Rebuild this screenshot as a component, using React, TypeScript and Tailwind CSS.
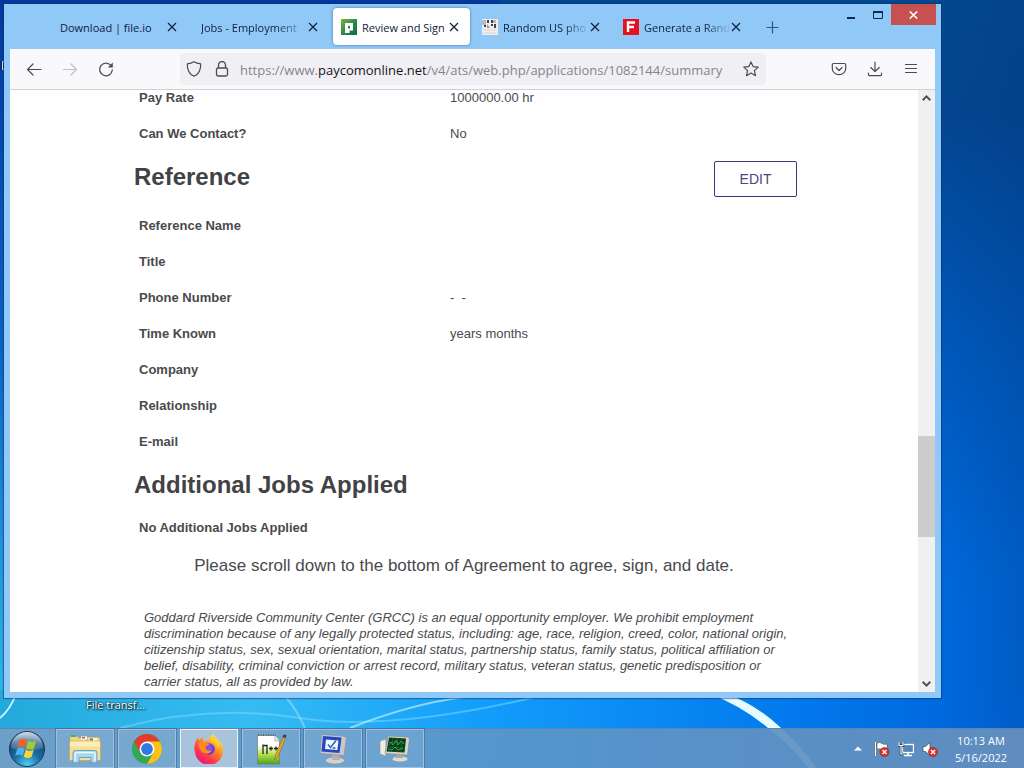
import type { ReactNode } from "react";

const ui = "font-['Open_Sans','Noto_Sans',sans-serif]";

function Cross() {
  return (
    <svg width="10" height="10" viewBox="0 0 10 10" fill="none" stroke="currentColor" strokeWidth="1.2" aria-hidden="true">
      <path d="M1 1l8 8M9 1L1 9" />
    </svg>
  );
}

function PaycomIcon() {
  return (
    <svg width="16" height="16" viewBox="0 0 16 16" className="shrink-0" aria-hidden="true">
      <defs>
        <linearGradient id="pay" x1="0" y1="0" x2="1" y2="1">
          <stop offset="0" stopColor="#7cb342" />
          <stop offset="0.5" stopColor="#2e8b4a" />
          <stop offset="1" stopColor="#0b6b47" />
        </linearGradient>
      </defs>
      <rect width="16" height="16" fill="url(#pay)" />
      <path d="M4 4h8v7.500H8.500V14H4z" fill="#fff" />
      <path d="M7 7h2v2.500H7z" fill="#1f7f49" />
    </svg>
  );
}

function PhoneIcon() {
  return (
    <svg width="16" height="16" viewBox="0 0 16 16" className="shrink-0" aria-hidden="true">
      <rect width="16" height="16" fill="#f0eff0" />
      <path d="M0 1h4v5H0zM11 1h3v3h-3z" fill="#b7babb" />
      <path d="M5 1h2v3H5zM9 5h2v2H9zM2 6h2v2H2z" fill="#33445c" />
      <path d="M9 1h2v3H9zM12 5h2v4h-2z" fill="#48413d" />
      <path d="M5 5l3 4H5z" fill="#bd8d83" />
      <path d="M1 11h14M1 14h14" stroke="#d4d4d8" />
    </svg>
  );
}

function FIcon() {
  return (
    <svg width="16" height="16" viewBox="0 0 16 16" className="shrink-0" aria-hidden="true">
      <rect width="16" height="16" fill="#e8101c" />
      <path d="M5 13V3.500h7M5 8h6" fill="none" stroke="#fff" strokeWidth="2.400" />
    </svg>
  );
}

const tabs: { title: string; icon?: ReactNode; active?: boolean; fade?: boolean }[] = [
  { title: "Download | file.io" },
  { title: "Jobs - Employment", fade: true },
  { title: "Review and Sign", icon: <PaycomIcon />, active: true },
  { title: "Random US pho", icon: <PhoneIcon />, fade: true },
  { title: "Generate a Rand", icon: <FIcon />, fade: true },
];

function TabBar() {
  return (
    <div className="flex h-[45px] items-start pl-[47px]">
      <div role="tablist" className="flex min-w-0 gap-1 pt-1">
        {tabs.map((t) => (
          <div
            key={t.title}
            className={
              "flex h-[37px] w-[137px] min-w-0 items-center gap-[5px] rounded pr-[11px] " +
              (t.icon ? "pl-2 " : "pl-[9px] ") +
              (t.active ? "bg-white shadow-[0_0_3px_rgba(20,60,110,0.6)]" : "")
            }
          >
            {t.icon}
            <button
              type="button"
              role="tab"
              aria-selected={!!t.active}
              className={
                "-mr-[5px] min-w-0 flex-1 pt-0.5 text-left text-[11px] leading-4 whitespace-nowrap text-[#10203c] " +
                (t.fade ? "mask-r-from-70% mask-r-to-100%" : "")
              }
            >
              {t.title}
            </button>
            <button type="button" aria-label={"Close " + t.title} className="shrink-0 text-[#10203c]">
              <Cross />
            </button>
          </div>
        ))}
      </div>
      <button type="button" aria-label="New tab" className="mt-[17px] ml-[14px] text-[#31537c]">
        <svg width="13" height="13" viewBox="0 0 13 13" stroke="currentColor" strokeWidth="1.2" aria-hidden="true">
          <path d="M6.500 0.500v12M0.500 6.500h12" />
        </svg>
      </button>
      <div className="ml-auto flex items-start text-[#0c2a50]">
        <button type="button" aria-label="Minimize" className="flex h-[21px] w-[27px] items-center justify-center">
          <svg width="10" height="10" viewBox="0 0 10 10" aria-hidden="true">
            <path d="M1 7h8v2H1z" fill="currentColor" />
          </svg>
        </button>
        <button type="button" aria-label="Maximize" className="flex h-[21px] w-[27px] items-center justify-center">
          <svg width="10" height="8" viewBox="0 0 10 8" fill="none" aria-hidden="true">
            <path d="M0.500 1h9v6.500h-9z" stroke="currentColor" />
            <path d="M0 0h10v2H0z" fill="currentColor" />
          </svg>
        </button>
        <button type="button" aria-label="Close" className="mr-[5px] flex h-[21px] w-[45px] items-center justify-center bg-[#c75050] text-white">
          <svg width="9" height="8" viewBox="0 0 9 8" fill="none" stroke="currentColor" strokeWidth="1.600" aria-hidden="true">
            <path d="M0.800 0.500l7.400 7M8.200 0.500l-7.400 7" />
          </svg>
        </button>
      </div>
    </div>
  );
}

function Toolbar() {
  return (
    <div className="flex h-[41px] shrink-0 items-center border-b border-[#cfcfd4] bg-[#f9f9fb] text-[#4b4b53]">
      <div className="flex items-center gap-5 pl-4">
        <button type="button" aria-label="Back">
          <svg width="16" height="16" viewBox="0 0 16 16" fill="none" stroke="currentColor" strokeWidth="1.200" strokeLinecap="round" strokeLinejoin="round" aria-hidden="true">
            <path d="M15 8.500H1.500M7 3L1.500 8.500 7 14" />
          </svg>
        </button>
        <button type="button" aria-label="Forward" className="text-[#c0c0c5]">
          <svg width="16" height="16" viewBox="0 0 16 16" fill="none" stroke="currentColor" strokeWidth="1.200" strokeLinecap="round" strokeLinejoin="round" aria-hidden="true">
            <path d="M1.500 8.500H14.500M9 3L14.500 8.500 9 14" />
          </svg>
        </button>
        <button type="button" aria-label="Reload">
          <svg width="16" height="16" viewBox="0 0 16 16" fill="none" stroke="currentColor" strokeWidth="1.300" strokeLinecap="round" aria-hidden="true">
            <path d="M13.300 5A6.300 6.300 0 1 0 14.300 9" />
            <path d="M14.800 1.500v5H9.800z" fill="currentColor" stroke="none" />
          </svg>
        </button>
      </div>
      <div className="ml-[66px] flex h-8 min-w-0 flex-1 items-center rounded bg-[#f0f0f4] pl-[6px]">
        <svg width="16" height="16" viewBox="0 0 16 16" fill="none" stroke="currentColor" strokeWidth="1.200" strokeLinejoin="round" className="shrink-0" aria-hidden="true">
          <path d="M8 0.800C6 2 4 2.600 1.300 2.900C1.100 9 3 13 8 15.300C13 13 14.900 9 14.700 2.900C12 2.600 10 2 8 0.800Z" />
        </svg>
        <svg width="14" height="16" viewBox="0 0 14 16" fill="none" stroke="currentColor" strokeWidth="1.300" className="ml-[13px] shrink-0" aria-hidden="true">
          <rect x="1.500" y="7" width="11" height="8" rx="1.500" />
          <path d="M3.500 7V4a3.500 3.500 0 0 1 7 0v3" />
        </svg>
        <div className="ml-[11px] min-w-0 flex-1 overflow-hidden pt-0.5 text-[13px] leading-5 whitespace-nowrap text-[#85858c]">
          https://www.<span className="text-[#15141a]">paycomonline.net</span>/v4/ats/web.php/applications/1082144/summary
        </div>
        <button type="button" aria-label="Bookmark this page" className="mr-[7px] shrink-0">
          <svg width="16" height="16" viewBox="0 0 16 16" fill="none" stroke="currentColor" strokeWidth="1.200" strokeLinejoin="round" aria-hidden="true">
            <path d="M8 0.900l2.100 4.700 5.100.5-3.800 3.500 1.100 5.100L8 12.100l-4.500 2.600 1.100-5.100L.8 6.100l5.100-.5z" />
          </svg>
        </button>
      </div>
      <div className="ml-[65px] flex items-center gap-5 pr-4">
        <button type="button" aria-label="Save to Pocket">
          <svg width="16" height="16" viewBox="0 0 16 16" fill="none" stroke="currentColor" strokeWidth="1.200" strokeLinecap="round" strokeLinejoin="round" aria-hidden="true">
            <path d="M2.500 2.500h11a1.200 1.200 0 0 1 1.200 1.200V7.500a6.700 6.200 0 0 1-13.400 0V3.700a1.200 1.200 0 0 1 1.200-1.200z" />
            <path d="M5 6.500l3 3 3-3" />
          </svg>
        </button>
        <button type="button" aria-label="Downloads">
          <svg width="16" height="16" viewBox="0 0 16 16" fill="none" stroke="currentColor" strokeWidth="1.200" strokeLinecap="round" strokeLinejoin="round" aria-hidden="true">
            <path d="M8 1v9.500M3.800 6.500L8 10.500l4.200-4M1.500 12v1.500a1.200 1.200 0 0 0 1.200 1.200h10.600a1.200 1.200 0 0 0 1.200-1.200V12" />
          </svg>
        </button>
        <button type="button" aria-label="Open application menu">
          <svg width="16" height="16" viewBox="0 0 16 16" stroke="currentColor" strokeWidth="1.200" strokeLinecap="round" aria-hidden="true">
            <path d="M2.500 3.500h11M2.500 7.500h11M2.500 11.500h11" />
          </svg>
        </button>
      </div>
    </div>
  );
}

function Rows({ rows }: { rows: [string, string][] }) {
  return (
    <table className="w-full table-fixed text-left text-[13px] leading-[15px]">
      <tbody>
        {rows.map(([label, value]) => (
          <tr key={label} className="h-9">
            <th scope="row" className="w-[319px] pl-2 font-bold">{label}</th>
            <td className="whitespace-pre">{value}</td>
          </tr>
        ))}
      </tbody>
    </table>
  );
}

function Page() {
  return (
    <main className="min-w-0 flex-1 overflow-hidden bg-white font-['Liberation_Sans',Arial,sans-serif] text-[#4a4a4c]">
      <div className="mx-auto w-full max-w-[666px]">
        <div className="-mt-[11px]">
          <Rows rows={[["Pay Rate", "1000000.00 hr"], ["Can We Contact?", "No"]]} />
        </div>
        <div className="flex h-14 items-center justify-between pl-[3px]">
          <h2 className="pb-1 text-[24px] leading-7 font-bold text-[#424244]">Reference</h2>
          <button type="button" className="h-9 w-[83px] rounded-xs border border-[#3b3878] text-[14px] text-[#4a4784]">
            EDIT
          </button>
        </div>
        <Rows
          rows={[
            ["Reference Name", ""],
            ["Title", ""],
            ["Phone Number", "-  -"],
            ["Time Known", "years months"],
            ["Company", ""],
            ["Relationship", ""],
            ["E-mail", ""],
          ]}
        />
        <h2 className="flex h-[50px] items-center pt-0.5 pl-[3px] text-[24px] leading-7 font-bold text-[#424244]">
          Additional Jobs Applied
        </h2>
        <p className="flex h-9 items-center pl-2 text-[13px] leading-[15px] font-bold">No Additional Jobs Applied</p>
        <p className="flex h-10 items-center justify-center pt-0.5 text-[17px]">
          Please scroll down to the bottom of Agreement to agree, sign, and date.
        </p>
        <p className="mt-[25px] pl-[13px] text-[13px] leading-4 italic">
          Goddard Riverside Community Center (GRCC) is an equal opportunity employer. We prohibit employment
          <br />
          discrimination because of any legally protected status, including: age, race, religion, creed, color, national origin,
          <br />
          citizenship status, sex, sexual orientation, marital status, partnership status, family status, political affiliation or
          <br />
          belief, disability, criminal conviction or arrest record, military status, veteran status, genetic predisposition or
          <br />
          carrier status, all as provided by law.
        </p>
      </div>
    </main>
  );
}

function Scrollbar() {
  return (
    <div className="flex w-[17px] shrink-0 flex-col bg-[#f0f0f0] text-[#505050]">
      <button type="button" aria-label="Scroll up" className="flex h-[15px] items-center justify-center">
        <svg width="9" height="6" viewBox="0 0 9 6" fill="none" stroke="currentColor" strokeWidth="2" aria-hidden="true">
          <path d="M0.700 5.200L4.500 1.400 8.300 5.200" />
        </svg>
      </button>
      <div className="grow-[331]" />
      <div className="h-[101px] bg-[#cdcdcd]" />
      <div className="grow-[138]" />
      <button type="button" aria-label="Scroll down" className="flex h-[17px] items-center justify-center">
        <svg width="9" height="6" viewBox="0 0 9 6" fill="none" stroke="currentColor" strokeWidth="2" aria-hidden="true">
          <path d="M0.700 0.800L4.500 4.600 8.300 0.800" />
        </svg>
      </button>
    </div>
  );
}

function StartOrb() {
  return (
    <svg width="38" height="38" viewBox="0 0 38 38" aria-hidden="true">
      <defs>
        <radialGradient id="orb" cx="0.5" cy="0.95" r="0.95">
          <stop offset="0" stopColor="#4fd0f4" />
          <stop offset="0.4" stopColor="#1a6fa4" />
          <stop offset="0.75" stopColor="#164a78" />
          <stop offset="1" stopColor="#6d9cc0" />
        </radialGradient>
        <linearGradient id="gloss" x1="0" y1="0" x2="0" y2="1">
          <stop offset="0" stopColor="#fff" stopOpacity="0.65" />
          <stop offset="1" stopColor="#fff" stopOpacity="0.12" />
        </linearGradient>
      </defs>
      <circle cx="19" cy="19" r="17.500" fill="url(#orb)" stroke="#173a5c" />
      <path d="M3 18a16 16 0 0 1 32 0q-16 5-32 0z" fill="url(#gloss)" />
      <path d="M11.500 10c2.300-1.600 5-1.700 7.500 0l-2 7.600c-2.600-1.600-5.100-1.600-7.500 0z" fill="#f0622a" />
      <path d="M20 10.800c2.700 1.500 5.300 1.500 8 0l-2 7.600c-2.700 1.600-5.300 1.500-8 0z" fill="#9ccb3b" />
      <path d="M9.200 18.700c2.500-1.600 5-1.600 7.500 0l-2 7.200c-2.500-1.600-5-1.600-7.500 0z" fill="#4fb0ee" />
      <path d="M17.700 19.500c2.700 1.600 5.300 1.600 8 0l-2 7.200c-2.700 1.600-5.300 1.600-8 0z" fill="#fcd23a" />
    </svg>
  );
}

function ExplorerIcon() {
  return (
    <svg width="34" height="32" viewBox="0 0 34 32" aria-hidden="true">
      <path d="M2 3h7l2 2h8v6H2z" fill="#f0d88a" stroke="#b8954a" strokeWidth="0.600" />
      <path d="M3 2h5v2H3z" fill="#4caf50" />
      <path d="M19 4h11l2 2v8H19z" fill="#f2d98c" stroke="#b8954a" strokeWidth="0.600" />
      <path d="M13 3.500h6v3h-6z" fill="#fff" />
      <path d="M14 4h3v1.500h-3z" fill="#e64a32" />
      <path d="M22 5.500h7v2h-7z" fill="#fff" />
      <path d="M22 5.500h3v2h-3z" fill="#3c7dc2" />
      <path d="M1.500 8h31v19.500h-31z" fill="#f5df95" stroke="#c9a44e" strokeWidth="0.700" />
      <path d="M2 8.500h30v5H2z" fill="#fbeeb8" />
      <path d="M5 30V20q0-2.500 2.500-2.500h19Q29 17.500 29 20v10h-6v-5.500H11V30z" fill="#a9d8ee" stroke="#4b97bd" strokeWidth="0.800" />
      <path d="M7 28v-7q0-1.500 1.500-1.500h17q1.500 0 1.500 1.500v7" fill="none" stroke="#e7f7fd" strokeWidth="1.500" />
    </svg>
  );
}

function ChromeIcon() {
  return (
    <svg width="32" height="32" viewBox="0 0 32 32" aria-hidden="true">
      <circle cx="16" cy="16" r="15" fill="#34a853" />
      <path d="M3.010 8.500A15 15 0 0 1 28.990 8.500H16L9.500 19.750z" fill="#e33b2e" />
      <path d="M28.990 8.500A15 15 0 0 1 16 31L22.500 19.750 16 8.500z" fill="#fbc116" />
      <circle cx="16" cy="16" r="7.500" fill="#fff" />
      <circle cx="16" cy="16" r="5.900" fill="#2f78e8" />
    </svg>
  );
}

function FirefoxIcon() {
  return (
    <svg width="30" height="30" viewBox="0 0 32 32" aria-hidden="true">
      <defs>
        <linearGradient id="fox" x1="0.850" y1="0.050" x2="0.200" y2="0.950">
          <stop offset="0" stopColor="#fff44f" />
          <stop offset="0.350" stopColor="#ff9a20" />
          <stop offset="0.700" stopColor="#ff3b47" />
          <stop offset="1" stopColor="#e31587" />
        </linearGradient>
        <radialGradient id="globe" cx="0.500" cy="0.400" r="0.600">
          <stop offset="0" stopColor="#9059ff" />
          <stop offset="1" stopColor="#5b2fc0" />
        </radialGradient>
      </defs>
      <path d="M29.800 11c-.7-1.700-2.100-3.500-3.200-4.100 .8 1.600 1.100 2.600 1.300 3.300C26 5.600 22.800 3.900 20.300 0c-3.400 2-4.200 5-4.300 6.600-2 .1-3.700.9-5.100 2C9.800 7.200 9.500 5.300 9.800 3.300 7.800 4.200 6.500 5.600 5.400 6.900 4.700 6 4.500 4.400 4.700 3.400 2.800 5 1.500 7.600 1 11 .2 14 .2 18 1.300 20.800A15 15 0 0 0 31 17c.1-2-.4-4.400-1.200-6z" fill="url(#fox)" />
      <circle cx="16" cy="16" r="6.200" fill="url(#globe)" />
      <path d="M5 10c3-2 6-1.400 7.500.2 1.500.2 3 .1 4 .3 0 1.800-3.800 2.100-4.300 3.900 1.200 3.300 4 3.800 6.800 2.900-1.500 3.400-5.400 4.700-8.800 2.800C7 18.500 5 14 5 10z" fill="#ff8a20" />
      <path d="M18 8c5 .5 7.500 4 6.800 8.500 2-2.500 1.800-6 .7-8.500C24 5 21 4 20 1c-1.500 2-2.500 4.500-2 7z" fill="#ffce35" />
    </svg>
  );
}

function NotepadIcon() {
  return (
    <svg width="32" height="32" viewBox="0 0 32 32" aria-hidden="true">
      <defs>
        <linearGradient id="npp" x1="0" y1="0" x2="0" y2="1">
          <stop offset="0.350" stopColor="#fff" />
          <stop offset="0.650" stopColor="#b9e04c" />
          <stop offset="1" stopColor="#4ca322" />
        </linearGradient>
      </defs>
      <path d="M2.500 2.500h18l4 5V31h-22z" fill="url(#npp)" stroke="#71806c" strokeWidth="0.700" />
      <path d="M3 2h18" stroke="#555" strokeWidth="1.500" strokeDasharray="1 1.500" />
      <path d="M20 3v5h4.500" fill="#e9eee5" stroke="#87917f" strokeWidth="0.600" />
      <path d="M8 21v-9.500M8 12.500h4V21M14 15.500h4M16 13.500v4M19 15.500h4M21 13.500v4" fill="none" stroke="#1b2a18" strokeWidth="1.300" />
      <path d="M19.500 27l1-5L28 4.500l2.500 1-7.500 18z" fill="#e4a62e" stroke="#966416" strokeWidth="0.600" />
      <path d="M27.500 4l1-2.500 3 .5-.8 3z" fill="#394260" />
    </svg>
  );
}

function DisplayIcon() {
  return (
    <svg width="32" height="32" viewBox="0 0 32 32" aria-hidden="true">
      <ellipse cx="18" cy="27.500" rx="9.500" ry="3.500" fill="#d4d2cb" stroke="#908f91" strokeWidth="0.600" />
      <path d="M15 21h7l1 6h-8z" fill="#b2b1ae" />
      <path d="M4.500 1.500L26 3l3.500 1.500-2.500 18L3 20.500z" fill="#c9c8c4" stroke="#8a8c95" strokeWidth="0.600" />
      <path d="M6 3l18.500 1.500-2 15.500L4.500 18.500z" fill="#2348c4" />
      <path d="M9 6.500l12.500 1-1.200 9.500L8 16z" fill="#f4f8ff" />
      <path d="M11 11.500l2.500 3L19 7.500" fill="none" stroke="#356dc5" strokeWidth="1.700" />
      <path d="M15.500 15h3" stroke="#283547" strokeWidth="1.200" />
    </svg>
  );
}

function MonitorIcon() {
  return (
    <svg width="32" height="32" viewBox="0 0 32 32" aria-hidden="true">
      <path d="M1 8l6-2v17l-6-2z" fill="#ecebe5" stroke="#8f9092" strokeWidth="0.600" />
      <ellipse cx="21" cy="26" rx="8" ry="3" fill="#dcdad2" stroke="#8d8d8d" strokeWidth="0.600" />
      <path d="M17 21h6l1 4h-7z" fill="#aaa9a5" />
      <path d="M9 3l19.500 1 2 1.500L28.500 22 6 20.500z" fill="#d6d4cb" stroke="#85877f" strokeWidth="0.600" />
      <path d="M10 4.500L27 5.500l-1.500 14L7.500 18.500z" fill="#0b3a1a" />
      <path d="M9 9l17.500 1M8 14l17.500 1M14 5l-1.500 13.500M18.500 5.200L17.500 19M23 5.500L22 19" stroke="#1f7a37" strokeWidth="0.600" />
      <path d="M10 12l2-3 2 3 3-5 2 5 3-4 3 3M9 16l4 1 3-3 3 3 5-2" fill="none" stroke="#2fae4a" strokeWidth="0.900" />
    </svg>
  );
}

const apps: { name: string; icon: ReactNode; active?: boolean }[] = [
  { name: "Windows Explorer", icon: <ExplorerIcon /> },
  { name: "Google Chrome", icon: <ChromeIcon /> },
  { name: "Firefox", icon: <FirefoxIcon />, active: true },
  { name: "Notepad++", icon: <NotepadIcon /> },
  { name: "Display", icon: <DisplayIcon /> },
  { name: "System Monitor", icon: <MonitorIcon /> },
];

function RedBadge({ x }: { x: number }) {
  return (
    <g>
      <circle cx={x} cy="11" r="4.600" fill="#d8342c" stroke="#8b1d18" strokeWidth="0.500" />
      <path d={`M${x - 2} 9l4 4M${x + 2} 9l-4 4`} stroke="#fff" strokeWidth="1.400" />
    </g>
  );
}

function Taskbar() {
  return (
    <footer className="relative flex h-10 shrink-0 items-stretch border-t border-[#5c86ad] bg-linear-to-r from-[#719fc8]/95 via-[#5b95c8]/90 to-[#648fbe]/95">
      <button type="button" aria-label="Start" className="flex w-[54px] items-center justify-center">
        <StartOrb />
      </button>
      <nav aria-label="Running programs" className="flex gap-1 pl-[2px]">
        {apps.map((a) => (
          <button
            key={a.name}
            type="button"
            aria-label={a.name}
            className={
              "flex w-[58px] items-center justify-center border " +
              (a.active ? "border-[#e9f3fb] bg-[#a9c3dc]" : "border-[#a2c0dc] bg-white/10 shadow-[0_0_0_1px_rgba(50,90,130,0.45)]")
            }
          >
            {a.icon}
          </button>
        ))}
      </nav>
      <div className="ml-auto flex items-center text-white">
        <button type="button" aria-label="Show hidden icons" className="mr-3">
          <svg width="8" height="5" viewBox="0 0 8 5" aria-hidden="true">
            <path d="M0 4.500L4 0.500l4 4z" fill="#fff" />
          </svg>
        </button>
        <div className="flex items-center gap-2">
          <svg width="16" height="16" viewBox="0 0 16 16" role="img" aria-label="Action Center">
            <path d="M1.500 1v14" stroke="#223" strokeWidth="3" />
            <path d="M1.500 1v14" stroke="#fff" strokeWidth="1.800" />
            <path d="M3 2q3-1 5 .5t5 .5v6q-3 .5-5-.5T3 8z" fill="#fff" stroke="#445" strokeWidth="0.500" />
            <RedBadge x={10.500} />
          </svg>
          <svg width="16" height="16" viewBox="0 0 16 16" role="img" aria-label="Network">
            <rect x="4.500" y="3.500" width="11" height="8" fill="#5585b4" stroke="#fff" strokeWidth="1.300" />
            <path d="M6 14.500h8M10 12v2.500" stroke="#fff" strokeWidth="1.500" />
            <path d="M1 1v3.500h4V1M3 4.500V13h2" fill="none" stroke="#1f3348" strokeWidth="2.400" />
            <path d="M1 1v3.500h4V1M3 4.500V13h2" fill="none" stroke="#fff" strokeWidth="1.200" />
          </svg>
          <svg width="16" height="16" viewBox="0 0 16 16" role="img" aria-label="Volume muted">
            <path d="M1 5.500h2.500L8 1.500v13l-4.500-4H1z" fill="#fff" stroke="#334" strokeWidth="0.600" />
            <RedBadge x={11} />
          </svg>
        </div>
        <div className="w-[86px] text-center text-[11px] leading-[17px]">
          <div>10:13 AM</div>
          <div>5/16/2022</div>
        </div>
      </div>
    </footer>
  );
}

function Wallpaper() {
  return (
    <svg className="absolute inset-0 h-full w-full" viewBox="0 0 1024 768" preserveAspectRatio="none" aria-hidden="true">
      <defs>
        <linearGradient id="side" x1="0" y1="0" x2="0" y2="1">
          <stop offset="0" stopColor="#024890" />
          <stop offset="0.150" stopColor="#034590" />
          <stop offset="0.450" stopColor="#0058ba" />
          <stop offset="0.750" stopColor="#0068da" />
          <stop offset="1" stopColor="#0069e0" />
        </linearGradient>
        <linearGradient id="left" x1="0" y1="0" x2="0" y2="1">
          <stop offset="0" stopColor="#0238a0" />
          <stop offset="0.500" stopColor="#0a62c4" />
          <stop offset="1" stopColor="#2fb5e8" />
        </linearGradient>
        <linearGradient id="floor" x1="0" y1="0" x2="1" y2="0">
          <stop offset="0" stopColor="#24a9dc" />
          <stop offset="0.270" stopColor="#35bcf2" />
          <stop offset="0.520" stopColor="#129cfb" />
          <stop offset="0.850" stopColor="#0278ec" />
          <stop offset="1" stopColor="#0069df" />
        </linearGradient>
        <linearGradient id="shade" x1="0" y1="0" x2="1" y2="0">
          <stop offset="0" stopColor="#00357c" stopOpacity="0" />
          <stop offset="1" stopColor="#00357c" stopOpacity="0.250" />
        </linearGradient>
      </defs>
      <rect width="1024" height="768" fill="url(#side)" />
      <rect width="500" height="690" fill="url(#left)" />
      <rect y="690" width="941" height="78" fill="url(#floor)" />
      <rect x="941" width="83" height="768" fill="url(#shade)" />
      <path d="M0 61h4v9H0z" fill="#0b2f6c" />
      <path d="M4 61.500H2.500v8H4" fill="none" stroke="#d6e8fa" />
      <path d="M120 728q90-24 180-10t240-22" fill="none" stroke="#7fdcff" strokeOpacity="0.500" strokeWidth="2" />
      <path d="M350 728q60-24 115-31" fill="none" stroke="#b9ecff" strokeOpacity="0.700" strokeWidth="2" />
      <path d="M285 696q12 14 20 32" fill="none" stroke="#a6e8ff" strokeOpacity="0.500" strokeWidth="2" />
      <path d="M0 718q10-8 16-24" fill="none" stroke="#c6f4ff" strokeWidth="2" />
      <path d="M710 694q32 12 58 34 26 20 40 40h8q-14-21-36-41-26-24-54-33z" fill="#e6fbff" />
    </svg>
  );
}

export default function App() {
  return (
    <div className={"relative flex h-screen flex-col overflow-hidden bg-[#0059bd] " + ui}>
      <Wallpaper />
      <div className="relative flex min-h-0 flex-1 flex-col pt-1 pr-[83px] pl-1">
        <section className="flex min-h-0 flex-1 flex-col bg-[#90c8f8] shadow-[0_0_1px_1px_rgba(10,50,110,0.5)]">
          <TabBar />
          <div className="mx-[6px] mb-[6px] flex min-h-0 flex-1 flex-col bg-white">
            <Toolbar />
            <div className="flex min-h-0 flex-1">
              <Page />
              <Scrollbar />
            </div>
          </div>
        </section>
        <div className="h-[30px] shrink-0 pl-[82px] text-[11px] leading-[14px] text-white [text-shadow:1px_1px_2px_#000,0_0_2px_#000]">
          File transf...
        </div>
      </div>
      <Taskbar />
    </div>
  );
}
